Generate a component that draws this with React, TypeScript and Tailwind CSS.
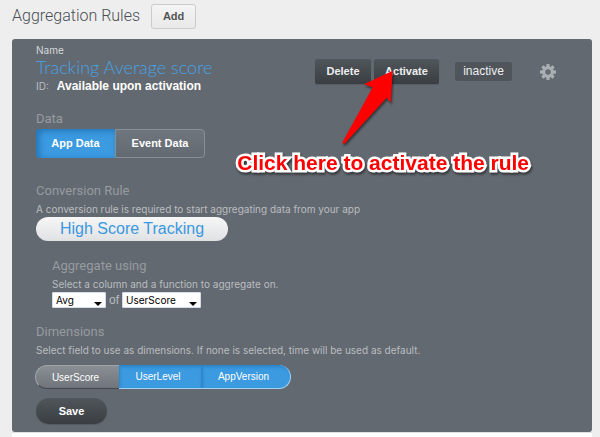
import { useState } from "react";
import type { ReactNode } from "react";

const darkButton =
  "bg-linear-to-b from-[#50565b] to-[#3a3e42] font-bold text-[#eeeeee] text-[11px] shadow-[0_1px_1px_#555b62]";

function SectionTitle({ children }: { children: ReactNode }) {
  return <h2 className="font-['Roboto','Liberation_Sans',sans-serif] text-[13px] leading-4 text-[#969ba0]">{children}</h2>;
}

function Hint({ children }: { children: ReactNode }) {
  return <p className="mt-0.5 font-['Inter','Liberation_Sans',sans-serif] text-[10px] leading-4 text-[#b9bdc1]">{children}</p>;
}

function Picker({ label, value, options, width }: { label: string; value: string; options: string[]; width: string }) {
  return (
    <span className={"relative flex h-4 " + width}>
      <select
        aria-label={label}
        defaultValue={value}
        className="h-4 w-full appearance-none rounded-[1px] border border-[#d5dbe8] bg-white pl-[3px] font-['Inter','Liberation_Sans',sans-serif] text-[10px] leading-3 text-black"
      >
        {options.map((o) => (
          <option key={o}>{o}</option>
        ))}
      </select>
      <svg viewBox="0 0 8 4" className="pointer-events-none absolute right-1 bottom-0.5 h-1 w-2" aria-hidden="true">
        <path d="M0 0h8L4 4z" fill="#000" />
      </svg>
    </span>
  );
}

function Gear() {
  return (
    <svg viewBox="-8 -8 16 16" className="size-4" aria-hidden="true">
      <g fill="#a9aeb3">
        {[0, 45, 90, 135].map((a) => (
          <path key={a} d="M-1.4-8h2.8l.5 3v10l-.5 3h-2.8l-.5-3v-10z" transform={`rotate(${a})`} />
        ))}
        <circle r="5.4" />
      </g>
      <circle r="2.7" fill="#636970" />
    </svg>
  );
}

export default function App() {
  const [tab, setTab] = useState("App Data");
  return (
    <main className="bg-[#eeeeee] px-3 pr-2 font-['Liberation_Sans',Arial,sans-serif]">
      <header className="flex h-[39px] items-start gap-[11px] pt-1">
        <h1 className="font-['Roboto','Liberation_Sans',sans-serif] text-base leading-6 font-light text-[#4a4f54]">
          Aggregation Rules
        </h1>
        <button className="h-[25px] w-[45px] rounded-[3px] border border-[#cccccc] bg-linear-to-b from-[#f4f4f4] to-[#e9e9e9] text-[11px] font-bold text-[#555555]">
          Add
        </button>
      </header>

      <section className="relative rounded-[3px] bg-[#636970] px-6 pt-1.5 pb-2">
        <div className="flex justify-between">
          <div>
            <p className="font-['Inter','Liberation_Sans',sans-serif] text-[10px] leading-[11px] text-[#d4d7da]">Name</p>
            <p className="font-['Lato','Liberation_Sans',sans-serif] text-[18px] leading-[22px] font-light text-[#46a3e8]">
              Tracking Average score
            </p>
            <p className="flex items-center gap-2 leading-4">
              <span className="font-['Inter','Liberation_Sans',sans-serif] text-[10px] text-[#b9bdc1]">ID:</span>
              <span className="text-[12px] font-bold text-white">Available upon activation</span>
            </p>
          </div>
          <div className="mt-3.5 mr-3 flex h-[25px] items-center">
            <button className={darkButton + " h-[25px] w-14 rounded-[2px]"}>Delete</button>
            <button className={darkButton + " ml-[3px] h-[25px] w-[65px] rounded-[2px]"}>Activate</button>
            <span className="ml-4 w-[57px] rounded-[2px] bg-[#50555c] text-center text-[12px] leading-[19px] text-[#eeeeee]">
              inactive
            </span>
            <button aria-label="Settings" className="ml-7">
              <Gear />
            </button>
          </div>
        </div>

        <div className="mt-[17px]">
          <SectionTitle>Data</SectionTitle>
          <div className="mt-0.5 flex text-[11px] font-bold text-white">
            <button
              onClick={() => setTab("App Data")}
              aria-pressed={tab === "App Data"}
              className="h-[29px] w-[79px] rounded-l-[4px] bg-[#3b9ae0] shadow-[inset_3px_2px_6px_#2274b4]"
            >
              App Data
            </button>
            <button
              onClick={() => setTab("Event Data")}
              aria-pressed={tab === "Event Data"}
              className="h-[29px] w-[90px] rounded-r-[4px] border border-[#898e94] bg-linear-to-b from-[#70767d] to-[#636970]"
            >
              Event Data
            </button>
          </div>
        </div>

        <div className="mt-[25px]">
          <SectionTitle>Conversion Rule</SectionTitle>
          <Hint>A conversion rule is required to start aggregating data from your app</Hint>
          <button className="block h-6 w-48 rounded-full bg-linear-to-b from-[#f7f7f7] to-[#dfe1e3] text-[16px] leading-6 text-[#3b98df]">
            High Score Tracking
          </button>
        </div>

        <div className="mt-[17px] pl-4">
          <SectionTitle>Aggregate using</SectionTitle>
          <Hint>Select a column and a function to aggregate on.</Hint>
          <div className="flex items-center gap-[3px] text-[12px] leading-4 text-[#b9bdc1]">
            <Picker label="Function" value="Avg" options={["Avg", "Sum", "Min", "Max"]} width="w-[54px]" />
            <span>of</span>
            <Picker label="Column" value="UserScore" options={["UserScore", "UserLevel", "AppVersion"]} width="w-[79px]" />
          </div>
        </div>

        <div className="mt-4">
          <SectionTitle>Dimensions</SectionTitle>
          <Hint>Select field to use as dimensions. If none is selected, time will be used as default.</Hint>
          <div className="mt-[7px] -ml-px flex text-[10px] text-white">
            <button className="h-6 w-[84px] rounded-l-full border border-r-0 border-[#a0a4a8] border-b-[#44484c] bg-linear-to-b from-[#8a8f95] to-[#70757b] pr-1">
              UserScore
            </button>
            <button className="h-6 w-[82px] border-b border-[#a5d0f0] bg-[#3b9ae0] pr-1 shadow-[inset_1px_2px_3px_#2a83c8]">
              UserLevel
            </button>
            <button className="h-6 w-[90px] rounded-r-full border-r border-b border-[#a5d0f0] bg-[#3b9ae0] pr-1 shadow-[inset_2px_2px_3px_#2a83c8]">
              AppVersion
            </button>
          </div>
          <button className={darkButton + " mt-[9px] block h-[26px] w-[71px] rounded-full text-white"}>Save</button>
        </div>

        <svg
          viewBox="0 0 60 85"
          className="pointer-events-none absolute top-[25px] right-[192px] h-[85px] w-[60px] drop-shadow-[1px_2px_1px_#00000080]"
          aria-hidden="true"
        >
          <path d="M52.700 6.700L24 20.300L32.700 23.300L2.300 78.500Q3 80.500 5 79.300L46.700 33.700L50.700 38.700Z" fill="#ff0000" />
        </svg>
        <p className="pointer-events-none absolute top-[112px] right-[63px] text-[21px] leading-6 font-bold whitespace-nowrap text-[#ff0000] [paint-order:stroke_fill] [-webkit-text-stroke:5px_#fff] drop-shadow-[1px_2px_1px_#00000080]">
          Click here to activate the rule
        </p>
      </section>
      <div className="h-[5px] border-t border-[#dfe1e2] bg-white" />
    </main>
  );
}
